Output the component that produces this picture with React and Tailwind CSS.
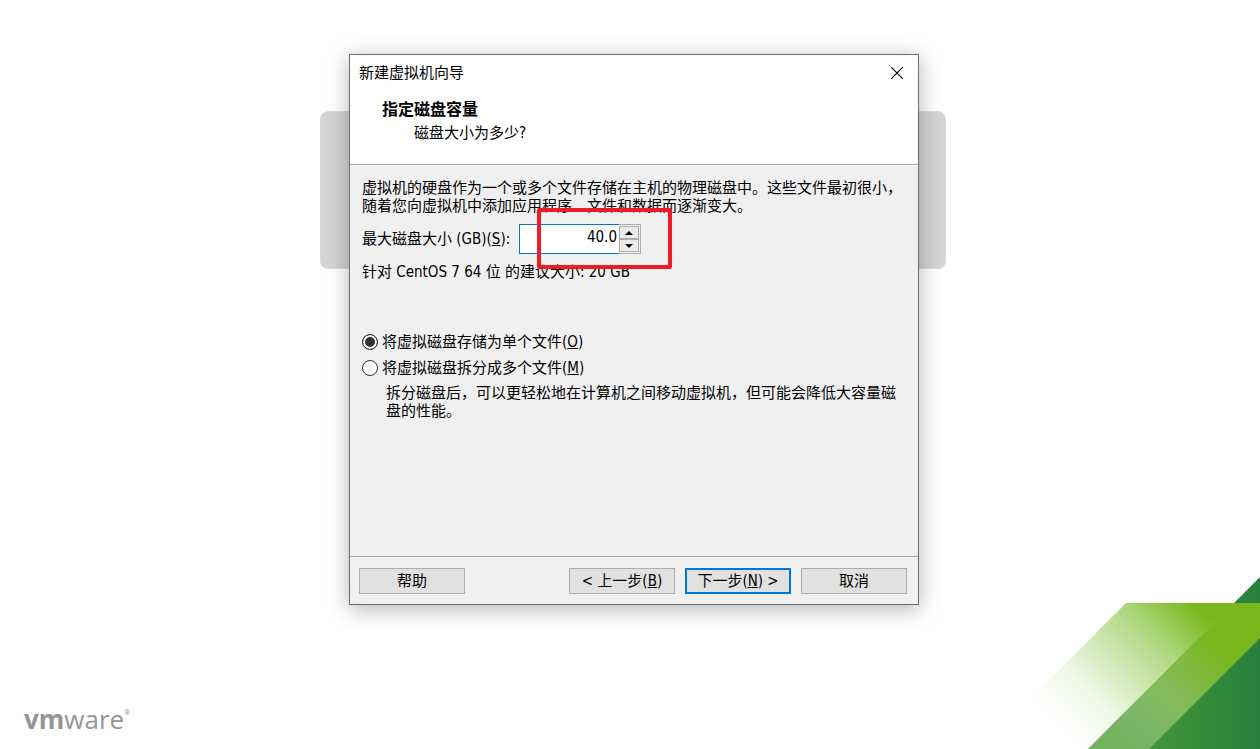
import React, { useState } from "react";

const BUTTON =
  "h-[26px] w-[106px] border border-[#adadad] bg-[#e1e1e1] text-[15px] leading-5 whitespace-nowrap hover:bg-[#e5f1fb]";

function Backdrop() {
  return (
    <svg
      width="230"
      height="172"
      viewBox="0 0 230 172"
      className="col-start-1 row-start-1 self-end justify-self-end"
      aria-hidden="true"
    >
      <defs>
        <linearGradient id="dark" gradientUnits="userSpaceOnUse" x1="100" y1="0" x2="230" y2="0">
          <stop offset="0" stopColor="#4c993f" />
          <stop offset="0.5" stopColor="#378d3b" />
          <stop offset="1" stopColor="#27803c" />
        </linearGradient>
        <linearGradient id="fade" gradientUnits="userSpaceOnUse" x1="25" y1="144" x2="153" y2="16">
          <stop offset="0" stopColor="#ffffff" />
          <stop offset="0.25" stopColor="#eff8e7" />
          <stop offset="0.7" stopColor="#b0d880" />
          <stop offset="1" stopColor="#78b81e" />
        </linearGradient>
        <linearGradient id="band" gradientUnits="userSpaceOnUse" x1="60" y1="133" x2="155" y2="38">
          <stop offset="0" stopColor="#74b15d" />
          <stop offset="0.15" stopColor="#7bb569" />
          <stop offset="0.5" stopColor="#84bc5c" />
          <stop offset="1" stopColor="#78b81e" />
        </linearGradient>
      </defs>
      <path d="M230 0 58 172H230Z" fill="url(#dark)" />
      <path d="M96 26H204L58 172H-50Z" fill="url(#fade)" />
      <path d="M204 26H230V61L119 172H58Z" fill="url(#band)" />
    </svg>
  );
}

function Logo() {
  return (
    <div className="col-start-1 row-start-1 flex items-start self-end pb-2.5 pl-6 font-['Open_Sans',sans-serif] text-[26px] leading-10 text-[#939598]">
      <span className="font-bold">vm</span>
      <span>ware</span>
      <span className="pt-2 text-[7px] leading-3">®</span>
    </div>
  );
}

function DiskSizeField({ value, onChange }) {
  const step = (delta) => onChange((Number(value) + delta).toFixed(1));

  return (
    <div className="mt-[9px] flex h-[30px] items-center">
      <label htmlFor="disk-size" className="w-[157px] whitespace-nowrap">
        最大磁盘大小 (GB)(<u>S</u>):
      </label>
      <div className="relative flex h-full w-[122px]">
        <input
          id="disk-size"
          type="text"
          inputMode="decimal"
          value={value}
          onChange={(e) => onChange(e.target.value)}
          className="h-full min-w-0 flex-1 border border-r-0 border-[#0078d7] bg-white pr-0.5 pb-1 text-right outline-none"
        />
        <div className="flex w-[22px] flex-col border border-l-0 border-[#abadb3] bg-[#f0f0f0] py-px pr-px">
          <button
            type="button"
            aria-label="增大"
            onClick={() => step(1)}
            className="flex flex-1 items-center justify-center border border-[#acacac] bg-[#ebebeb]"
          >
            <svg width="8" height="4" viewBox="0 0 8 4">
              <path d="M4 0 8 4H0Z" />
            </svg>
          </button>
          <button
            type="button"
            aria-label="减小"
            onClick={() => step(-1)}
            className="flex flex-1 items-center justify-center border border-[#acacac] bg-[#ebebeb]"
          >
            <svg width="8" height="4" viewBox="0 0 8 4">
              <path d="M4 4 8 0H0Z" />
            </svg>
          </button>
        </div>
        {/* Highlight around the size field */}
        <div className="pointer-events-none absolute -top-4 left-[18px] h-[61px] w-[135px] rounded-xs border-4 border-[#ed1c24]" />
      </div>
    </div>
  );
}

function WizardDialog() {
  const [size, setSize] = useState("40.0");
  const [mode, setMode] = useState("single");

  return (
    <div
      role="dialog"
      aria-labelledby="wizard-title"
      className="col-start-1 row-start-1 mt-[54px] w-[570px] self-start border border-[#6e6e6e] bg-[#f0f0f0] shadow-[0_4px_20px_rgba(0,0,0,0.3)]"
    >
      {/* Header */}
      <header className="border-b border-[#a0a0a0] bg-white pb-5">
        <div className="flex h-9 items-center justify-between pr-[15px] pl-[9px]">
          <h1 id="wizard-title">新建虚拟机向导</h1>
          <button type="button" aria-label="关闭">
            <svg width="12" height="12" viewBox="0 0 12 12" stroke="#000" strokeWidth="1.1">
              <path d="M0 0 12 12M12 0 0 12" />
            </svg>
          </button>
        </div>
        <h2 className="mt-[7px] pl-8 text-base leading-6 font-bold">指定磁盘容量</h2>
        <p className="pl-16 leading-[22px]">磁盘大小为多少?</p>
      </header>

      {/* Disk options */}
      <main className="border-t border-white pt-[13px] pr-3 pb-[136px] pl-3 leading-[18px]">
        <p>
          虚拟机的硬盘作为一个或多个文件存储在主机的物理磁盘中。这些文件最初很小，随着您向虚拟机中添加应用程序、文件和数据而逐渐变大。
        </p>
        <DiskSizeField value={size} onChange={setSize} />
        <p className="mt-[9px]">针对 CentOS 7 64 位 的建议大小: 20 GB</p>

        <div role="radiogroup" aria-label="磁盘文件" className="mt-[51px] flex flex-col gap-1.5 leading-5">
          <label className="flex items-center gap-1">
            <input
              type="radio"
              name="disk-mode"
              checked={mode === "single"}
              onChange={() => setMode("single")}
              className="size-4 appearance-none rounded-full border border-[#333] bg-white checked:border-[#333] checked:bg-[#333] checked:shadow-[inset_0_0_0_2px_#fff]"
            />
            <span>
              将虚拟磁盘存储为单个文件(<u>O</u>)
            </span>
          </label>
          <label className="flex items-center gap-1">
            <input
              type="radio"
              name="disk-mode"
              checked={mode === "split"}
              onChange={() => setMode("split")}
              className="size-4 appearance-none rounded-full border border-[#333] bg-white checked:border-[#333] checked:bg-[#333] checked:shadow-[inset_0_0_0_2px_#fff]"
            />
            <span>
              将虚拟磁盘拆分成多个文件(<u>M</u>)
            </span>
          </label>
        </div>
        <p className="mt-1.5 pr-2 pl-6">
          拆分磁盘后，可以更轻松地在计算机之间移动虚拟机，但可能会降低大容量磁盘的性能。
        </p>
      </main>

      {/* Footer */}
      <footer className="border-t border-[#a0a0a0]">
        <div className="flex items-center gap-2.5 border-t border-white pt-2.5 pr-[11px] pb-2.5 pl-[9px]">
          <button type="button" className={`${BUTTON} mr-auto`}>
            帮助
          </button>
          <button type="button" className={BUTTON}>
            &lt; 上一步(<u>B</u>)
          </button>
          <button type="button" className={`${BUTTON} outline-2 -outline-offset-2 outline-[#0078d7]`}>
            下一步(<u>N</u>) &gt;
          </button>
          <button type="button" className={BUTTON}>
            取消
          </button>
        </div>
      </footer>
    </div>
  );
}

function App() {
  return (
    <div className="grid min-h-screen grid-cols-1 bg-white font-['DejaVu_Sans_Condensed','Noto_Sans_CJK_SC',sans-serif] text-[15px] text-black">
      <Backdrop />
      <Logo />
      <div className="col-start-1 row-start-1 grid justify-items-center self-start pl-2">
        <div className="col-start-1 row-start-1 mt-[111px] mr-0.5 h-[158px] w-[626px] self-start rounded-lg border border-[#d9d9d9] bg-[#d4d4d4]" />
        <WizardDialog />
      </div>
    </div>
  );
}

export default App;
